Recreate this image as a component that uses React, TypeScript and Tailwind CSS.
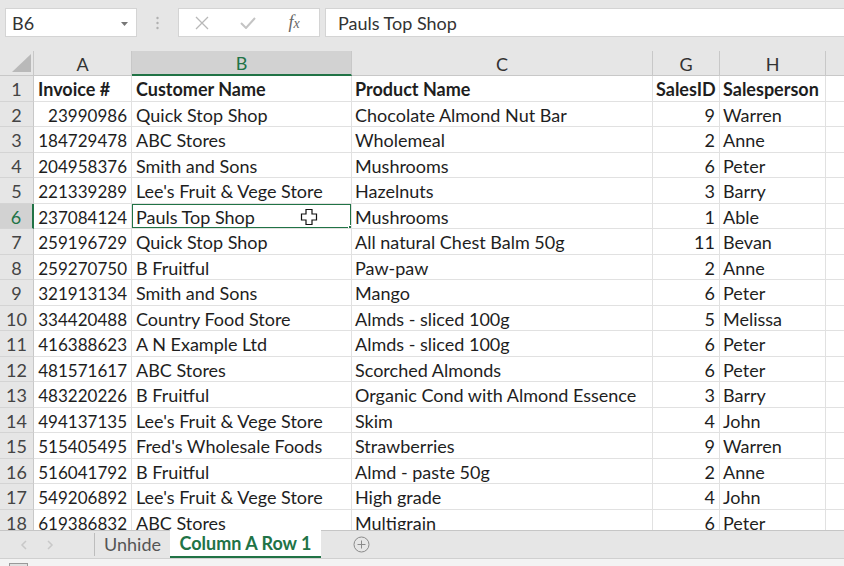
import React from "react";

const rows: [string, string, string, string, string][] = [
  ["23990986", "Quick Stop Shop", "Chocolate Almond Nut Bar", "9", "Warren"],
  ["184729478", "ABC Stores", "Wholemeal", "2", "Anne"],
  ["204958376", "Smith and Sons", "Mushrooms", "6", "Peter"],
  ["221339289", "Lee's Fruit & Vege Store", "Hazelnuts", "3", "Barry"],
  ["237084124", "Pauls Top Shop", "Mushrooms", "1", "Able"],
  ["259196729", "Quick Stop Shop", "All natural Chest Balm 50g", "11", "Bevan"],
  ["259270750", "B Fruitful", "Paw-paw", "2", "Anne"],
  ["321913134", "Smith and Sons", "Mango", "6", "Peter"],
  ["334420488", "Country Food Store", "Almds - sliced 100g", "5", "Melissa"],
  ["416388623", "A N Example Ltd", "Almds - sliced 100g", "6", "Peter"],
  ["481571617", "ABC Stores", "Scorched Almonds", "6", "Peter"],
  ["483220226", "B Fruitful", "Organic Cond with Almond Essence", "3", "Barry"],
  ["494137135", "Lee's Fruit & Vege Store", "Skim", "4", "John"],
  ["515405495", "Fred's Wholesale Foods", "Strawberries", "9", "Warren"],
  ["516041792", "B Fruitful", "Almd - paste 50g", "2", "Anne"],
  ["549206892", "Lee's Fruit & Vege Store", "High grade", "4", "John"],
  ["619386832", "ABC Stores", "Multigrain", "6", "Peter"],
];

const cols = "grid grid-cols-[34px_98px_220px_301px_67px_106px_1fr]";
const cell = "h-[25.5px] pt-[3px] border-r border-b border-[#e1e1e1] flex items-center overflow-hidden whitespace-nowrap";

export default function App() {
  return (
    <div className="w-[844px] h-[566px] overflow-hidden bg-white text-[#1e1e1e] flex flex-col" style={{ fontFamily: "Lato, 'Open Sans', sans-serif" }}>
      {/* Formula bar */}
      <div className="h-[51px] shrink-0 bg-[#e6e6e6] flex items-start pt-[8px] pl-[5px]">
        <div className="w-[132px] h-[29px] bg-white border border-[#d4d4d4] flex items-center justify-between pl-[6px] pr-[8px] pt-[2px] text-[18px] text-[#333]">
          <span>B6</span>
          <svg width="7" height="4" viewBox="0 0 7 4"><path d="M0 0h7L3.5 4z" fill="#777" /></svg>
        </div>
        <div className="w-[41px] h-[29px] flex items-center justify-center">
          <svg width="3" height="14" viewBox="0 0 3 14"><circle cx="1.5" cy="2" r="1.2" fill="#b0b0b0" /><circle cx="1.5" cy="7" r="1.2" fill="#b0b0b0" /><circle cx="1.5" cy="12" r="1.2" fill="#b0b0b0" /></svg>
        </div>
        <div className="w-[142px] h-[29px] bg-white border border-[#d4d4d4] flex items-center">
          <div className="w-[46px] flex justify-center">
            <svg width="14" height="14" viewBox="0 0 14 14"><path d="M1 1L13 13M13 1L1 13" stroke="#b8b8b8" strokeWidth="1.3" /></svg>
          </div>
          <div className="w-[46px] flex justify-center">
            <svg width="16" height="12" viewBox="0 0 16 12"><path d="M1 6L6 11L15 1" stroke="#c4c4c4" strokeWidth="2" fill="none" /></svg>
          </div>
          <div className="w-[46px] flex justify-center text-[#666] text-[18px] italic" style={{ fontFamily: "'Liberation Serif', serif" }}>
            <span>f<span className="text-[14px]">x</span></span>
          </div>
        </div>
        <div className="ml-[5px] flex-1 h-[29px] bg-white border border-[#d4d4d4] border-r-0 flex items-center pl-[12px] pt-[2px] text-[18px] text-[#333]">
          Pauls Top Shop
        </div>
      </div>

      {/* Grid */}
      <div className="h-[479px] shrink-0 overflow-hidden relative">
        <div className={`${cols} h-[25px] bg-[#e6e6e6] text-[18px] text-[#333]`}>
          <div className="h-[25px] border-r border-b border-[#c8c8c8] relative">
            <svg className="absolute right-[2px] bottom-[3px]" width="19" height="18" viewBox="0 0 19 18"><path d="M19 0V18H0z" fill="#b9b9b9" /></svg>
          </div>
          <div className="h-[25px] pt-[2px] border-r border-b border-[#c8c8c8] flex items-center justify-center">A</div>
          <div className="h-[25px] pt-[2px] bg-[#d2d2d2] border-r border-[#c8c8c8] border-b-2 border-b-[#217346] flex items-center justify-center text-[#217346]">B</div>
          <div className="h-[25px] pt-[2px] border-r border-b border-[#c8c8c8] flex items-center justify-center">C</div>
          <div className="h-[25px] pt-[2px] border-r border-b border-[#c8c8c8] flex items-center justify-center">G</div>
          <div className="h-[25px] pt-[2px] border-r border-b border-[#c8c8c8] flex items-center justify-center">H</div>
          <div className="h-[25px] border-b border-[#c8c8c8]"></div>
        </div>
        <div className={`${cols} text-[18px]`}>
          <div className={`${cell} bg-[#e6e6e6] border-r-[#c8c8c8] border-b-[#d4d4d4] justify-center text-[#444]`}>1</div>
          <div className={`${cell} font-bold pl-[4px]`}>Invoice #</div>
          <div className={`${cell} font-bold pl-[4px]`}>Customer Name</div>
          <div className={`${cell} font-bold pl-[3px]`}>Product Name</div>
          <div className={`${cell} font-bold pl-[3px]`}>SalesID</div>
          <div className={`${cell} font-bold pl-[3px]`}>Salesperson</div>
          <div className={`${cell} border-r-0`}></div>
          {rows.map((r, i) => {
            const n = i + 2;
            const sel = n === 6;
            return (
              <React.Fragment key={n}>
                <div className={`${cell} justify-center ${sel ? "bg-[#d2d2d2] text-[#217346] border-r-2 border-r-[#217346]" : "bg-[#e6e6e6] text-[#444] border-r-[#c8c8c8]"} border-b-[#d4d4d4]`}>{n}</div>
                <div className={`${cell} justify-end pr-[4px] text-[17px]`}>{r[0]}</div>
                <div className={`${cell} pl-[4px] relative`}>
                  {sel && (
                    <>
                      <div className="absolute left-[-1px] top-[-1px] right-[-1px] bottom-[-1px] border-2 border-[#217346]"></div>
                      <div className="absolute right-[-4px] bottom-[-4px] w-[7px] h-[7px] bg-[#217346] border border-white z-10"></div>
                      <svg className="absolute left-[168px] top-[4px]" width="18" height="18" viewBox="0 0 18 18">
                        <path d="M6 1.5h6v4.5h4.5v6H12v4.5H6V12H1.5V6H6z" fill="white" stroke="#111" strokeWidth="1.2" />
                      </svg>
                    </>
                  )}
                  <span className="relative">{r[1]}</span>
                </div>
                <div className={`${cell} pl-[3px]`}>{r[2]}</div>
                <div className={`${cell} justify-end pr-[4px]`}>{r[3]}</div>
                <div className={`${cell} pl-[3px]`}>{r[4]}</div>
                <div className={`${cell} border-r-0`}></div>
              </React.Fragment>
            );
          })}
        </div>
      </div>

      {/* Sheet tabs */}
      <div className="h-[28px] shrink-0 bg-[#e6e6e6] border-t border-[#c6c6c6] flex items-stretch text-[18px]">
        <div className="w-[95px] flex items-center pl-[20px] gap-[18px] border-r border-[#bdbdbd] my-[2px]">
          <svg width="8" height="10" viewBox="0 0 8 10"><path d="M6 1L2 5L6 9" stroke="#c8c8c8" strokeWidth="1.5" fill="none" /></svg>
          <svg width="8" height="10" viewBox="0 0 8 10"><path d="M2 1L6 5L2 9" stroke="#c8c8c8" strokeWidth="1.5" fill="none" /></svg>
        </div>
        <div className="px-[9px] flex items-center text-[#555]">Unhide</div>
        <div className="w-[151px] bg-white flex items-center justify-center font-bold text-[#217346] border-b-2 border-[#217346] -mt-px">Column A Row 1</div>
        <div className="ml-[32px] flex items-center">
          <svg width="17" height="17" viewBox="0 0 17 17"><circle cx="8.5" cy="8.5" r="7.5" stroke="#8a8a8a" strokeWidth="1" fill="none" /><path d="M8.5 4.5v8M4.5 8.5h8" stroke="#8a8a8a" strokeWidth="1" /></svg>
        </div>
      </div>
      <div className="flex-1 bg-[#f3f3f3] border-t border-[#d0d0d0] relative">
        <div className="absolute left-[9px] top-[4px] w-[19px] h-[10px] border border-[#999] bg-[#e0e0e0]"></div>
      </div>
    </div>
  );
}
